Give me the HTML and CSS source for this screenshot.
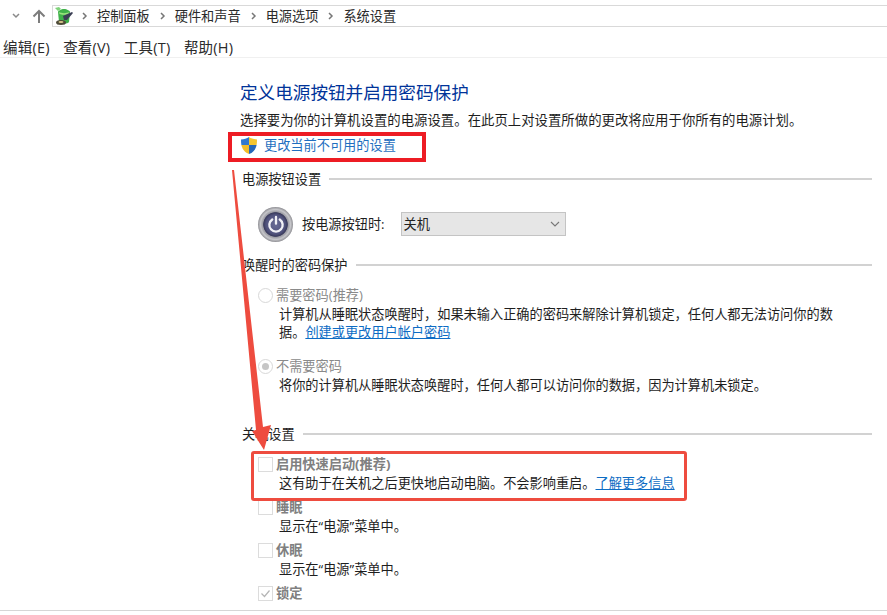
FILE: index.html
```html
<!DOCTYPE html>
<html lang="zh-CN">
<head>
<meta charset="utf-8">
<title>系统设置</title>
<link rel="stylesheet" href="styles.css">
</head>
<body>
<div class="page">
  <nav class="toolbar">
    <svg class="chev-down" width="8" height="6" viewBox="0 0 8 6"><path d="M1 1l3 3 3-3" fill="none" stroke="#8a8a8a" stroke-width="1.5"/></svg>
    <svg class="up-arrow" width="14" height="15" viewBox="0 0 14 15"><path d="M7 14V2M1.500 7.500L7 2l5.500 5.500" fill="none" stroke="#7d7d7d" stroke-width="2"/></svg>
    <div class="address">
      <svg class="cp-icon" width="20" height="20" viewBox="0 0 20 20">
        <path d="M4 6c0-1 3-3 6-3s6 2 6 3l-1 10c-1 2-9 2-10 0z" fill="#3fb24a"/>
        <path d="M5 6c2 1.500 8 1.500 10 0l-.5 2c-2 1-7 1-9 0z" fill="#9ae37f"/>
        <path d="M9 10l9-4 1 1-6 7-3 0z" fill="#3b3f55"/>
        <ellipse cx="7" cy="16.500" rx="5" ry="2.500" fill="#4d4a38"/>
        <ellipse cx="7" cy="16" rx="2.500" ry="1" fill="#d8c88a"/>
        <path d="M1 2l4-1 2 2-3 2z" fill="#7fd27a"/>
      </svg>
      <svg class="crumb-sep" width="6" height="8" viewBox="0 0 6 8"><path d="M1 1l3 3-3 3" fill="none" stroke="#777" stroke-width="1.500"/></svg>
      <span class="crumb">控制面板</span>
      <svg class="crumb-sep" width="6" height="8" viewBox="0 0 6 8"><path d="M1 1l3 3-3 3" fill="none" stroke="#777" stroke-width="1.500"/></svg>
      <span class="crumb">硬件和声音</span>
      <svg class="crumb-sep" width="6" height="8" viewBox="0 0 6 8"><path d="M1 1l3 3-3 3" fill="none" stroke="#777" stroke-width="1.500"/></svg>
      <span class="crumb">电源选项</span>
      <svg class="crumb-sep" width="6" height="8" viewBox="0 0 6 8"><path d="M1 1l3 3-3 3" fill="none" stroke="#777" stroke-width="1.500"/></svg>
      <span class="crumb">系统设置</span>
    </div>
  </nav>
  <div class="menubar">
    <span>编辑(E)</span><span>查看(V)</span><span>工具(T)</span><span>帮助(H)</span>
  </div>
  <main class="content">
    <h1 class="title">定义电源按钮并启用密码保护</h1>
    <p class="intro">选择要为你的计算机设置的电源设置。在此页上对设置所做的更改将应用于你所有的电源计划。</p>
    <a class="admin-link" href="#">
      <svg width="18" height="19" viewBox="0 0 18 19">
        <path d="M9 1C7 2.500 4 3.200 1 3.400c0 2 .1 3.900.4 5.600H9z" fill="#2f78cf"/>
        <path d="M9 1c2 1.500 5 2.200 8 2.400 0 2-.1 3.900-.4 5.600H9z" fill="#f5c52f"/>
        <path d="M1.400 9C2.200 13 4.500 16.300 9 18V9z" fill="#f2bd2a"/>
        <path d="M16.600 9C15.800 13 13.500 16.300 9 18V9z" fill="#2566b8"/>
      </svg>
      <span>更改当前不可用的设置</span>
    </a>

    <section class="group group-power">
      <div class="group-head"><span>电源按钮设置</span><i></i></div>
      <div class="power-row">
        <div class="power-btn">
          <svg width="20" height="20" viewBox="0 0 24 24"><path d="M7.500 6.500a8 8 0 1 0 9 0M12 3.500v8" fill="none" stroke="#f1f1f6" stroke-width="2.800" stroke-linecap="round"/></svg>
        </div>
        <label class="power-label">按电源按钮时:</label>
        <div class="select"><span>关机</span>
          <svg width="10" height="6" viewBox="0 0 10 6"><path d="M1 1l4 4 4-4" fill="none" stroke="#777" stroke-width="1.100"/></svg>
        </div>
      </div>
    </section>

    <section class="group group-pass">
      <div class="group-head"><span>唤醒时的密码保护</span><i></i></div>
      <div class="option option-radio">
        <div class="opt-title"><span class="radio"></span><span>需要密码(推荐)</span></div>
        <p class="opt-desc">计算机从睡眠状态唤醒时，如果未输入正确的密码来解除计算机锁定，任何人都无法访问你的数据。<a href="#">创建或更改用户帐户密码</a></p>
      </div>
      <div class="option option-radio">
        <div class="opt-title"><span class="radio on"></span><span>不需要密码</span></div>
        <p class="opt-desc">将你的计算机从睡眠状态唤醒时，任何人都可以访问你的数据，因为计算机未锁定。</p>
      </div>
    </section>

    <section class="group group-shut">
      <div class="group-head"><span>关机设置</span><i></i></div>
      <div class="option option-check">
        <div class="opt-title strong"><span class="check"></span><span>启用快速启动(推荐)</span></div>
        <p class="opt-desc">这有助于在关机之后更快地启动电脑。不会影响重启。<a href="#">了解更多信息</a></p>
      </div>
      <div class="option option-check">
        <div class="opt-title strong"><span class="check"></span><span>睡眠</span></div>
        <p class="opt-desc">显示在“电源”菜单中。</p>
      </div>
      <div class="option option-check">
        <div class="opt-title strong"><span class="check"></span><span>休眠</span></div>
        <p class="opt-desc">显示在“电源”菜单中。</p>
      </div>
      <div class="option option-check">
        <div class="opt-title strong"><span class="check">
          <svg width="13" height="13" viewBox="0 0 13 13"><path d="M2.500 6.500l3 3 5-6" fill="none" stroke="#b5b5b5" stroke-width="1.200"/></svg>
        </span><span>锁定</span></div>
      </div>
    </section>
  </main>
  <div class="bottom-line"></div>

  <div class="mark mark-link"></div>
  <div class="mark mark-fast"></div>
  <svg class="mark-arrow" width="887" height="615" viewBox="0 0 887 615">
    <path d="M232 170L234 170L263 427L271 425L264 450L252 431L256 430Z" fill="#ee4c3f"/>
  </svg>
</div>
</body>
</html>
```
FILE: styles.css
```css
* { box-sizing: border-box; }
html, body { margin: 0; padding: 0; background: #fff; }
body {
  font-family: "Open Sans", "Noto Sans CJK SC", sans-serif;
  font-size: 13.2px;
  line-height: 20px;
  color: #1e1e1e;
}
.page { position: relative; width: 887px; height: 615px; overflow: hidden; }

.toolbar { display: flex; align-items: center; height: 32px; padding: 4px 0 4px 12px; }
.chev-down { margin-right: 12px; }
.up-arrow { margin-right: 6px; }
.address {
  flex: 1;
  display: flex;
  align-items: center;
  height: 22px;
  padding-left: 1px;
  border: 1px solid #d9d9d9;
  border-right: 0;
}
.cp-icon { margin-right: 8px; }
.crumb-sep { margin-right: 9px; }
.crumb { margin-right: 10px; color: #2a2a2a; }

.menubar { display: flex; gap: 13.5px; height: 26px; padding: 6px 0 0 3px; font-size: 14.5px; letter-spacing: .2px; color: #2a2a2a; border-bottom: 1px solid #f0f0f0; }

.content { padding: 0 15px 0 240px; }
.title { margin: 22px 0 0; font-size: 17.600px; line-height: 24px; font-weight: 400; color: #003399; }
.intro { margin: 6px 0 0; height: 20px; white-space: nowrap; font-size: 13.400px; }
.admin-link { display: flex; align-items: center; gap: 6px; margin-top: 5px; color: #1f6fc0; text-decoration: none; height: 20px; }

.group-head { display: flex; align-items: center; gap: 8px; margin-left: 2px; height: 20px; }
.group-head i { flex: 1; height: 2px; background: #d2d2d2; }
.group-power { margin-top: 14px; }
.group-pass { margin-top: 13px; }
.group-shut { margin-top: 30px; }

.power-row { display: flex; align-items: center; margin: 17px 0 0 18px; height: 36px; }
.power-btn {
  width: 35px; height: 35px; border-radius: 50%;
  display: flex; align-items: center; justify-content: center;
  background: radial-gradient(circle closest-side at 50% 50%, #6a6c96 0%, #50527c 55%, #3a3b5c 68%, #9a9aa2 72%, #c6c6ca 86%, #8f8f94 100%);
}
.power-label { margin-left: 9px; }
.select {
  display: flex; align-items: center; justify-content: space-between;
  width: 165px; height: 24px; margin-left: 16px; padding: 0 5px 0 2px;
  background: #e6e6e6; border: 1px solid #c4c4c4; color: #222;
}

.option { margin-left: 18px; }
.opt-title { display: flex; align-items: center; gap: 3px; color: #8a8a8a; height: 20px; }
.opt-title.strong { font-weight: 700; color: #808080; }
.opt-desc { margin: 0 0 0 21px; width: 570px; color: #1e1e1e; line-height: 18px; }
.opt-desc a { color: #0d6cc4; }
.option-radio { margin-top: 10px; }
.option-radio + .option-radio { margin-top: 15px; }
.option-check { height: 43px; }
.group-head + .option-check { margin-top: 10px; }

.radio { width: 15px; height: 15px; border: 1px solid #d8d8d8; border-radius: 50%; position: relative; background: #fff; }
.radio.on::after { content: ""; position: absolute; left: 3px; top: 3px; width: 7px; height: 7px; border-radius: 50%; background: #c6c6c6; }
.check { width: 15px; height: 15px; border: 1px solid #dcdcdc; display: flex; align-items: center; justify-content: center; background: #fff; }

.bottom-line { position: absolute; left: 0; right: 0; top: 610px; height: 1px; background: #d6d6d6; }

.mark { position: absolute; pointer-events: none; }
.mark-link { left: 228px; top: 132px; width: 198px; height: 30px; border: 4px solid #ed1c24; }
.mark-fast { left: 251px; top: 451px; width: 436px; height: 50px; border: 3px solid #ee4c3f; border-radius: 3px; }
.mark-arrow { position: absolute; left: 0; top: 0; pointer-events: none; }
```
